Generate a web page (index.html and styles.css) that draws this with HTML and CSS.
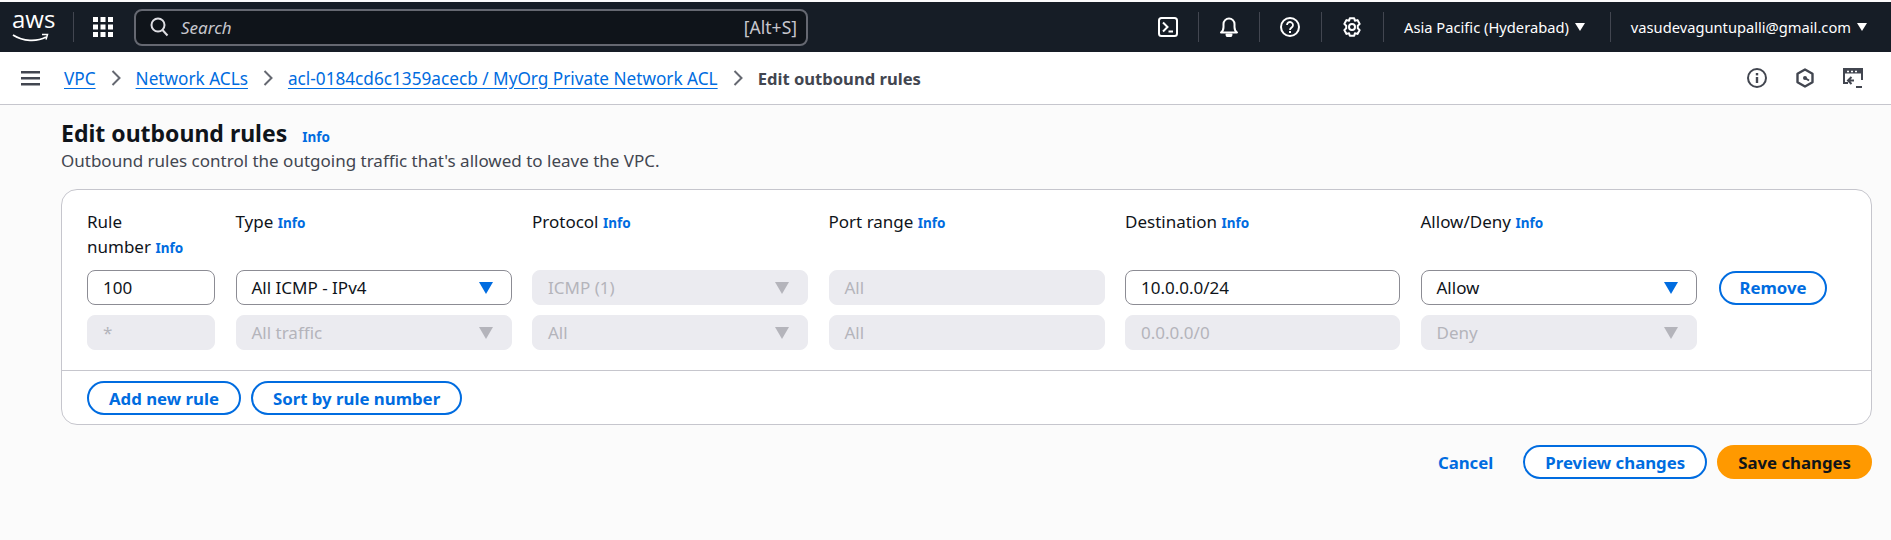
FILE: index.html
```html
<!DOCTYPE html>
<html lang="en">
<head>
<meta charset="utf-8">
<title>Edit outbound rules</title>
<link rel="stylesheet" href="styles.css">
</head>
<body>

<header class="topnav">
  <div class="logo">
    <span class="logo-text">aws</span>
    <svg class="logo-smile" width="38" height="10" viewBox="0 0 38 10"><path d="M1 2c10 6.500 24 7 33 2" fill="none" stroke="#fff" stroke-width="1.800"/><path d="M30 1.500l5.500 0-1.500 5" fill="none" stroke="#fff" stroke-width="1.500"/></svg>
  </div>
  <span class="nav-sep sep-logo"></span>
  <svg class="apps" width="20" height="20" viewBox="0 0 20 20" fill="#fff">
    <rect x="0" y="0" width="5" height="5"/><rect x="7.500" y="0" width="5" height="5"/><rect x="15" y="0" width="5" height="5"/>
    <rect x="0" y="7.500" width="5" height="5"/><rect x="7.500" y="7.500" width="5" height="5"/><rect x="15" y="7.500" width="5" height="5"/>
    <rect x="0" y="15" width="5" height="5"/><rect x="7.500" y="15" width="5" height="5"/><rect x="15" y="15" width="5" height="5"/>
  </svg>
  <div class="search">
    <svg width="19" height="20" viewBox="0 0 19 20" fill="none" stroke="#dedee3" stroke-width="2"><circle cx="8" cy="8" r="6.500"/><path d="M12.500 13l5 5.500"/></svg>
    <span class="search-text">Search</span>
    <span class="search-key">[Alt+S]</span>
  </div>
  <div class="nav-right">
    <svg class="nav-icon" width="20" height="20" viewBox="0 0 20 20" fill="none" stroke="#fff" stroke-width="2"><rect x="1" y="1" width="18" height="18" rx="2.500"/><path d="M5 5.500l4.500 4.500-4.500 4.500M10.500 14.500h4.500"/></svg>
    <span class="nav-sep"></span>
    <svg class="nav-icon" width="20" height="20" viewBox="0 0 20 20" fill="none" stroke="#fff" stroke-width="2" stroke-linejoin="round"><path d="M2 15.500c2-1.500 2.500-3 2.500-5.500V7a5.500 5.500 0 0 1 11 0v3c0 2.500.5 4 2.500 5.500z"/><path d="M7.500 17.500a2.500 2 0 0 0 5 0z" fill="#fff"/></svg>
    <span class="nav-sep"></span>
    <svg class="nav-icon nudge" width="20" height="20" viewBox="0 0 20 20" fill="none" stroke="#fff" stroke-width="2"><circle cx="10" cy="10" r="9"/><path d="M7 8a3 3 0 1 1 4.500 2.600c-1 .6-1.500 1.100-1.500 2.400" stroke-width="1.800"/><rect x="9" y="14" width="2" height="2" fill="#fff" stroke="none"/></svg>
    <span class="nav-sep"></span>
    <svg class="nav-icon nudge" width="20" height="20" viewBox="0 0 20 20" fill="none" stroke="#fff" stroke-width="2" stroke-linejoin="round"><path d="M7.800 1.200h4.400l.7 2.600 2.600-.7 2.200 3.800-1.900 1.900v2.400l1.900 1.900-2.200 3.800-2.600-.7-.7 2.600H7.800l-.7-2.600-2.600.7-2.200-3.800 1.900-1.900V8.800L2.300 6.900l2.200-3.800 2.600.7z"/><circle cx="10" cy="10" r="3"/></svg>
    <span class="nav-sep"></span>
    <span class="nav-text">Asia Pacific (Hyderabad)</span>
    <span class="caret"></span>
    <span class="nav-sep"></span>
    <span class="nav-text">vasudevaguntupalli@gmail.com</span>
    <span class="caret"></span>
  </div>
</header>

<nav class="crumbbar">
  <svg class="burger" width="19" height="15" viewBox="0 0 19 15" fill="#424650"><rect width="19" height="2.500"/><rect y="6" width="19" height="2.500"/><rect y="12" width="19" height="2.500"/></svg>
  <a class="crumb">VPC</a>
  <svg class="chev" width="10" height="16" viewBox="0 0 10 16" fill="none" stroke="#656871" stroke-width="2"><path d="M1.500 1l7 7-7 7"/></svg>
  <a class="crumb">Network ACLs</a>
  <svg class="chev" width="10" height="16" viewBox="0 0 10 16" fill="none" stroke="#656871" stroke-width="2"><path d="M1.500 1l7 7-7 7"/></svg>
  <a class="crumb">acl-0184cd6c1359acecb / MyOrg Private Network ACL</a>
  <svg class="chev" width="10" height="16" viewBox="0 0 10 16" fill="none" stroke="#656871" stroke-width="2"><path d="M1.500 1l7 7-7 7"/></svg>
  <span class="crumb-current">Edit outbound rules</span>
  <div class="tools">
    <svg width="20" height="20" viewBox="0 0 20 20" fill="none" stroke="#424650" stroke-width="2"><circle cx="10" cy="10" r="9"/><path d="M10 9v6" stroke-width="2.400"/><rect x="8.800" y="5" width="2.400" height="2.400" fill="#424650" stroke="none"/></svg>
    <svg width="20" height="20" viewBox="0 0 20 20" fill="none" stroke="#424650" stroke-width="2.400" stroke-linejoin="round"><path d="M10 1.500l7.500 4.200v8.600L10 18.500l-7.500-4.200V5.700z"/><circle cx="10" cy="10" r="2" fill="#424650" stroke="none"/><path d="M10 10l4 2.500" stroke-width="2"/></svg>
    <svg width="20" height="20" viewBox="0 0 20 20" fill="none" stroke="#424650" stroke-width="2"><path d="M5 15H1V1h18v11"/><path d="M1 3.500h18" stroke-width="4"/><path d="M4 3.500h2M8 3.500h2M12 3.500h2" stroke="#fff" stroke-width="1.500"/><path d="M8.500 9l-3.500 3.500L8.500 16M5 12.500h6" /><path d="M13 19h6" stroke-width="2"/></svg>
  </div>
</nav>

<main class="page">
  <h1 class="title">Edit outbound rules <a class="info">Info</a></h1>
  <p class="desc">Outbound rules control the outgoing traffic that's allowed to leave the VPC.</p>

  <section class="card">
    <div class="rules">
      <div class="label">Rule<br>number <a class="info">Info</a></div>
      <div class="label">Type <a class="info">Info</a></div>
      <div class="label">Protocol <a class="info">Info</a></div>
      <div class="label">Port range <a class="info">Info</a></div>
      <div class="label">Destination <a class="info">Info</a></div>
      <div class="label">Allow/Deny <a class="info">Info</a></div>
      <div></div>

      <div class="field">100</div>
      <div class="field select">All ICMP - IPv4<span class="tri"></span></div>
      <div class="field off select">ICMP (1)<span class="tri"></span></div>
      <div class="field off">All</div>
      <div class="field">10.0.0.0/24</div>
      <div class="field select">Allow<span class="tri"></span></div>
      <button class="btn remove">Remove</button>

      <div class="field off">*</div>
      <div class="field off select">All traffic<span class="tri"></span></div>
      <div class="field off select">All<span class="tri"></span></div>
      <div class="field off">All</div>
      <div class="field off">0.0.0.0/0</div>
      <div class="field off select">Deny<span class="tri"></span></div>
      <div></div>
    </div>
    <div class="card-foot">
      <button class="btn">Add new rule</button>
      <button class="btn">Sort by rule number</button>
    </div>
  </section>

  <div class="actions">
    <a class="cancel">Cancel</a>
    <button class="btn preview">Preview changes</button>
    <button class="btn save">Save changes</button>
  </div>
</main>

</body>
</html>
```

FILE: styles.css
```css
body {
    margin: 0;
    background: #fbfbfb;
    color: #0f141a;
    font-family: "Noto Sans", sans-serif;
    font-size: 17px;
}

/* top bar */
.topnav {
    margin-top: 2px;
    height: 50px;
    background: #161d26;
    display: flex;
    align-items: center;
    color: #fff;
}
.logo {
    margin-left: 12px;
    width: 38px;
    height: 36px;
    position: relative;
    text-align: center;
}
.logo-text {
    font-family: "Open Sans", sans-serif;
    font-size: 24px;
    line-height: 26px;
    display: block;
    margin-top: -3px;
}
.logo-smile {
    position: absolute;
    left: 0;
    top: 24px;
}
.nav-sep {
    width: 1px;
    height: 30px;
    background: #424650;
}
.sep-logo { margin-left: 23px; }
.apps { margin-left: 19px; }
.search {
    margin-left: 21px;
    width: 674px;
    height: 37px;
    box-sizing: border-box;
    border: 2px solid #656871;
    border-radius: 8px;
    background: #0f141a;
    display: flex;
    align-items: center;
    padding: 0 9px 0 14px;
}
.search-text {
    margin-left: 12px;
    font-style: italic;
    color: #c6c6cd;
    font-size: 17px;
}
.search-key {
    margin-left: auto;
    color: #c6c6cd;
    font-size: 17.500px;
}
.nav-right {
    margin-left: auto;
    padding-right: 19px;
    display: flex;
    align-items: center;
    gap: 20px;
}
.nudge { margin-right: 1px; }
.nav-text { font-size: 14.700px; }
.caret {
    margin-left: -14px;
    margin-right: 5px;
    width: 0;
    height: 0;
    border-left: 5px solid transparent;
    border-right: 5px solid transparent;
    border-top: 8px solid #fff;
}

/* breadcrumbs */
.crumbbar {
    height: 53px;
    box-sizing: border-box;
    background: #fff;
    border-bottom: 1px solid #c6c6cd;
    display: flex;
    align-items: center;
    padding-left: 21px;
    font-size: 17.200px;
}
.burger { margin-right: 24px; }
.crumb {
    color: #006ce0;
    text-decoration: underline;
    text-underline-offset: 3px;
}
.chev { margin: 0 15px; }
.crumb-current {
    font-size: 16.600px;
    font-weight: 700;
    color: #424650;
}
.tools {
    margin-left: auto;
    padding-right: 28px;
    display: flex;
    gap: 28px;
}

/* page content */
.page { padding: 12px 19px 0 61px; }
.title {
    margin: 0;
    font-size: 23px;
    line-height: 32px;
    font-weight: 700;
}
.title .info { margin-left: 9px; }
.desc {
    margin: 0;
    font-size: 17px;
    line-height: 24px;
    color: #424650;
}
.info {
    color: #006ce0;
    font-size: 13.500px;
    line-height: 1;
    font-weight: 700;
}
.card {
    margin-top: 16px;
    background: #fff;
    border: 1px solid #c6c6cd;
    border-radius: 16px;
}
.rules {
    padding: 20px 25px;
    display: grid;
    grid-template-columns: 128px 276px 276px 276px 275px 276px 110px;
    column-gap: 20.500px;
    row-gap: 10px;
    align-items: center;
    height: 180px;
    box-sizing: border-box;
    grid-template-rows: 50px 35px 35px;
}
.label {
    align-self: start;
    margin-top: -1px;
    font-size: 17px;
    line-height: 25px;
}
.field {
    height: 35px;
    box-sizing: border-box;
    border: 1px solid #8c8c94;
    border-radius: 8px;
    background: #fff;
    display: flex;
    align-items: center;
    padding: 0 15px;
    font-size: 17px;
}
.field.off {
    border-color: #ebebf0;
    background: #ebebf0;
    color: #b4b4bb;
}
.tri {
    margin-left: auto;
    margin-right: 3px;
    width: 0;
    height: 0;
    border-left: 7px solid transparent;
    border-right: 7px solid transparent;
    border-top: 12px solid #006ce0;
}
.off .tri { border-top-color: #b4b4bb; }
.btn {
    height: 34px;
    box-sizing: border-box;
    border: 2px solid #006ce0;
    border-radius: 20px;
    background: #fff;
    color: #006ce0;
    font-family: inherit;
    font-size: 16.800px;
    font-weight: 700;
    padding: 0 20px;
}
.remove {
    justify-self: end;
    width: 108px;
    padding: 0;
}
.card-foot {
    border-top: 1px solid #c6c6cd;
    padding: 10px 25px 9px;
    display: flex;
    gap: 10px;
}
.actions {
    margin-top: 20px;
    display: flex;
    justify-content: flex-end;
    align-items: center;
    gap: 10px;
}
.cancel {
    color: #006ce0;
    font-size: 16.800px;
    font-weight: 700;
    margin-right: 20px;
}
.save {
    background: #ff9900;
    border-color: #ff9900;
    color: #0f141a;
    padding: 0 19px;
}
```
